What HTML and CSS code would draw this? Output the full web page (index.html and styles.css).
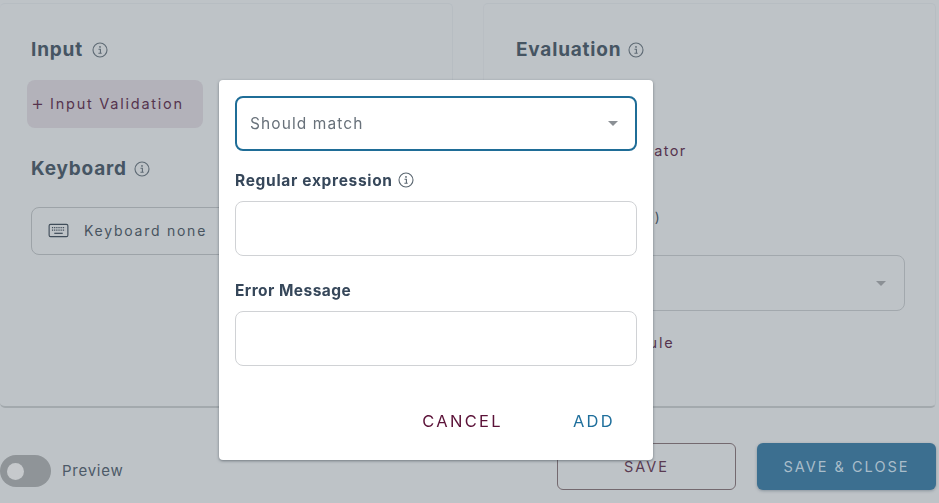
FILE: index.html
```html
<!DOCTYPE html>
<html lang="en">
<head>
<meta charset="utf-8">
<title>Question settings</title>
<link rel="stylesheet" href="styles.css">
</head>
<body>
<svg class="defs" width="0" height="0">
  <symbol id="info" viewBox="0 0 16 16">
    <circle cx="8" cy="8" r="7" fill="none" stroke="currentColor" stroke-width="1.1"/>
    <circle cx="8" cy="4.9" r="0.9" fill="currentColor"/>
    <path d="M6.5 7.2H8.4V11.2M6.4 11.3H9.7" fill="none" stroke="currentColor" stroke-width="1.1"/>
  </symbol>
</svg>
<main class="page">
  <div class="panels">
    <section class="panel panel-left">
      <h2 class="heading heading-input">Input <svg class="info"><use href="#info"/></svg></h2>
      <button class="add add-active"><span class="plus">+</span><span>Input Validation</span></button>
      <h2 class="heading heading-keyboard">Keyboard <svg class="info"><use href="#info"/></svg></h2>
      <div class="keyboard">
        <svg class="kbd" viewBox="0 0 22 16">
          <rect x="1" y="1.5" width="20" height="13" rx="1.5" fill="none" stroke="currentColor" stroke-width="1.2"/>
          <path d="M4 5H18M4 7.7H18" stroke="currentColor" stroke-width="1.3" stroke-dasharray="1.3 1"/>
          <path d="M6.5 11H15.5" stroke="currentColor" stroke-width="1.3"/>
        </svg>
        <span>Keyboard none</span>
      </div>
    </section>
    <section class="panel panel-right">
      <h2 class="heading">Evaluation <svg class="info"><use href="#info"/></svg></h2>
      <button class="add add-eval">+ Add New Evaluator</button>
      <p class="score">Pass score (0-100)</p>
      <div class="select-back"><span class="caret"></span></div>
      <button class="add add-rule">+ Add scoring rule</button>
    </section>
  </div>
  <footer class="footer">
    <div class="preview">
      <span class="toggle"><span class="knob"></span></span>
      <span class="preview-text">Preview</span>
    </div>
    <div class="actions">
      <button class="btn btn-save">SAVE</button>
      <button class="btn btn-close">SAVE &amp; CLOSE</button>
    </div>
  </footer>
</main>
<div class="backdrop">
  <div class="modal">
    <div class="select">
      <span>Should match</span>
      <span class="caret"></span>
    </div>
    <label class="label label-regex">Regular expression <svg class="info info-small"><use href="#info"/></svg></label>
    <div class="field"></div>
    <label class="label label-error">Error Message</label>
    <div class="field"></div>
    <div class="modal-actions">
      <button class="text-btn cancel">CANCEL</button>
      <button class="text-btn confirm">ADD</button>
    </div>
  </div>
</div>
</body>
</html>
```
FILE: styles.css
```css
* { box-sizing: border-box; }
html, body { margin: 0; height: 100%; overflow: hidden; }
body {
  background: #bec3c7;
  font-family: Inter, "Open Sans", sans-serif;
  color: #414f5c;
}
.defs { position: absolute; }
button { font-family: inherit; background: none; border: 0; padding: 0; }
.page { height: 503px; display: flex; flex-direction: column; padding-top: 3px; }
.panels { display: flex; gap: 30px; height: 405px; padding-right: 3px; }
.panel {
  flex: 1;
  padding: 0 32px;
  border: 1px solid #b7bdc2;
  border-width: 1px 1px 2px 1px;
  border-bottom-color: #a3a9ad;
  border-left-color: #b9bec3;
  border-radius: 5px;
  min-width: 0;
}
.panel-left { flex: 0 0 453px; border-left: 0; padding-left: 31px; }
.heading {
  margin: 34px 0 0;
  display: flex;
  align-items: center;
  gap: 7px;
  height: 24px;
  font-size: 19px;
  font-weight: 700;
  line-height: 24px;
  letter-spacing: .8px;
  color: #465563;
}
.heading-input { gap: 9px; }
.info { width: 16px; height: 16px; color: #5e6a74; flex: none; }
.add {
  display: block;
  font-size: 14.5px;
  letter-spacing: 1.75px;
  color: #56344e;
  text-align: left;
  white-space: nowrap;
}
.add-active {
  display: flex;
  align-items: center;
  gap: 6px;
  margin: 18px 0 0 -4px;
  width: 176px;
  height: 48px;
  padding: 0 0 1px 4px;
  background: #b3b2ba;
  border-radius: 8px;
}
.plus { font-size: 20px; font-weight: 300; line-height: 20px; letter-spacing: 0; margin-top: -2px; }
.heading-keyboard { margin-top: 29px; }
.keyboard {
  margin-top: 26px;
  height: 48px;
  display: flex;
  align-items: center;
  gap: 15px;
  padding: 0 0 2px 16px;
  border: 1px solid #9da3a8;
  border-radius: 8px;
  font-size: 14px;
  letter-spacing: 1.75px;
  color: #48545f;
}
.kbd { width: 21px; height: 15px; color: #3f4c59; flex: none; }
.add-eval { margin-top: 79px; height: 20px; line-height: 20px; letter-spacing: 1.38px; }
.score { margin: 46px 0 0; height: 20px; line-height: 20px; font-size: 13.5px; letter-spacing: 1.35px; }
.select-back {
  margin-top: 28px;
  height: 56px;
  width: 389px;
  display: flex;
  align-items: center;
  justify-content: flex-end;
  padding-right: 18px;
  border: 1px solid #a2a8ad;
  border-radius: 8px;
}
.add-rule { margin-top: 22px; height: 20px; line-height: 20px; }
.caret {
  width: 0;
  height: 0;
  border: 5px solid transparent;
  border-top-color: #8b9095;
  border-bottom: 0;
}
.footer {
  flex: 1;
  display: flex;
  align-items: flex-start;
  justify-content: space-between;
  padding-top: 35px;
  padding-right: 3px;
}
.preview { display: flex; align-items: center; gap: 11px; margin-top: 12px; font-size: 15px; letter-spacing: .75px; color: #4d5a68; }
.preview-text { margin-bottom: 2px; }
.toggle {
  width: 51px;
  height: 32px;
  padding-left: 7px;
  display: flex;
  align-items: center;
  background: #8f9498;
  border-radius: 16px;
}
.knob { width: 17px; height: 17px; border-radius: 50%; background: #c6c9cc; }
.actions { display: flex; gap: 21px; }
.btn {
  width: 179px;
  height: 47px;
  font-size: 14.5px;
  letter-spacing: 2px;
  border-radius: 6px;
}
.btn-save { border: 1px solid #74696f; color: #5a3b52; }
.btn-close { background: #3c6f90; color: #a9bdca; box-shadow: 0 1px 3px rgba(40, 60, 80, .35); }
.backdrop {
  position: fixed;
  inset: 0;
}
.modal {
  position: absolute;
  left: 219px;
  top: 80px;
  width: 434px;
  height: 380px;
  padding: 16px 16px 0;
  display: flex;
  flex-direction: column;
  background: #fff;
  border-radius: 4px;
  box-shadow: 0 1px 3px rgba(50, 60, 70, .55);
}
.select {
  height: 55px;
  display: flex;
  align-items: center;
  justify-content: space-between;
  padding: 0 17px 0 13px;
  border: 2px solid #1f6d97;
  border-radius: 8px;
  font-size: 15.5px;
  letter-spacing: 1.1px;
  color: #68717a;
}
.label {
  display: flex;
  align-items: center;
  gap: 5px;
  height: 20px;
  font-size: 15.5px;
  font-weight: 700;
  letter-spacing: .45px;
  color: #36475a;
}
.label-regex { margin-top: 19px; letter-spacing: .68px; }
.label-error { margin-top: 24px; }
.info-small { width: 16px; height: 16px; color: #5a6670; }
.field {
  margin-top: 11px;
  height: 55px;
  border: 1.5px solid #d0d2d5;
  border-radius: 8px;
}
.modal-actions {
  margin-top: 43px;
  display: flex;
  justify-content: flex-end;
  gap: 70px;
  padding-right: 22px;
}
.text-btn { font-size: 16.5px; letter-spacing: 2.3px; line-height: 24px; }
.cancel { color: #5b1238; }
.confirm { color: #1f6f9c; }
```
